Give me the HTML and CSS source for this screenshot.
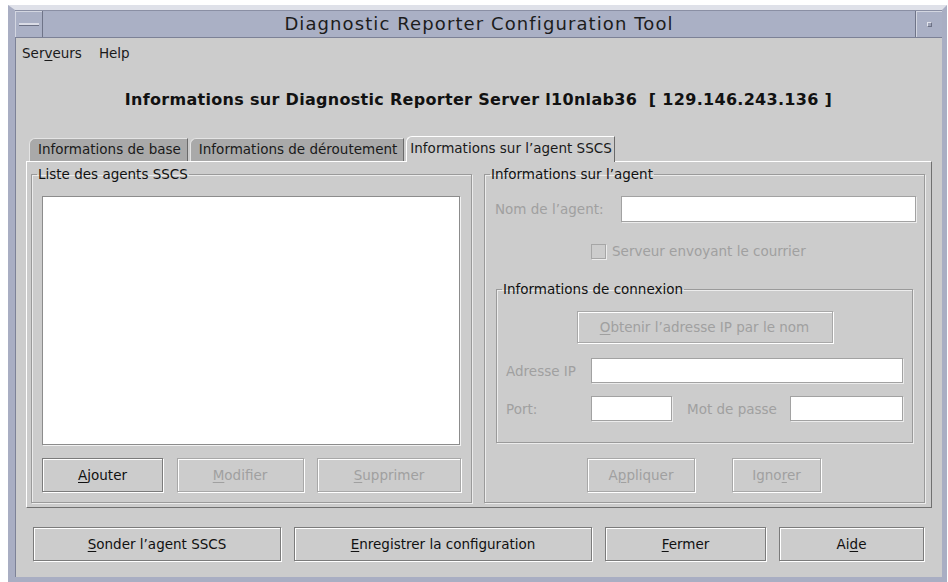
FILE: index.html
```html
<!DOCTYPE html>
<html lang="fr">
<head>
<meta charset="utf-8">
<title>Diagnostic Reporter Configuration Tool</title>
<link rel="stylesheet" href="styles.css">
</head>
<body>
<div class="window">
  <div class="titlebar">
    <div class="tb-btn tb-menu"><span class="tb-dash"></span></div>
    <div class="tb-title">Diagnostic Reporter Configuration Tool</div>
    <div class="tb-btn tb-max"><span class="tb-dot"></span></div>
  </div>

  <div class="menubar">
    <span class="menu-item">Ser<u>v</u>eurs</span>
    <span class="menu-item">Help</span>
  </div>

  <div class="client">
    <h1 class="server-heading">Informations sur Diagnostic Reporter Server l10nlab36&nbsp; [ 129.146.243.136 ]</h1>

    <div class="tabs">
      <div class="tab">Informations de base</div>
      <div class="tab">Informations de déroutement</div>
      <div class="tab active">Informations sur l’agent SSCS</div>
    </div>

    <div class="tab-panel">
      <fieldset class="group">
        <legend>Liste des agents SSCS</legend>
        <div class="agents-body">
          <div class="listbox"></div>
          <div class="agents-buttons">
            <button class="btn w-ajouter"><u>A</u>jouter</button>
            <button class="btn w-modifier" disabled><u>M</u>odifier</button>
            <button class="btn w-supprimer" disabled><u>S</u>upprimer</button>
          </div>
        </div>
      </fieldset>

      <fieldset class="group">
        <legend>Informations sur l’agent</legend>
        <div class="agent-body">
          <div class="row row-name">
            <label class="lbl lbl-name">Nom de l’agent:</label>
            <input class="field field-name" type="text" disabled>
          </div>
          <div class="row-check">
            <span class="checkbox"></span>
            <span class="lbl">Serveur envoyant le courrier</span>
          </div>

          <fieldset class="group conn">
            <legend>Informations de connexion</legend>
            <div class="conn-body">
              <div class="conn-lookup">
                <button class="btn w-lookup" disabled><u>O</u>btenir l’adresse IP par le nom</button>
              </div>
              <div class="row row-ip">
                <label class="lbl lbl-col">Adresse IP</label>
                <input class="field field-ip" type="text" disabled>
              </div>
              <div class="row row-port">
                <label class="lbl lbl-col">Port:</label>
                <input class="field field-port" type="text" disabled>
                <label class="lbl lbl-pass">Mot de passe</label>
                <input class="field field-pass" type="password" disabled>
              </div>
            </div>
          </fieldset>

          <div class="agent-buttons">
            <button class="btn w-appliquer" disabled>A<u>p</u>pliquer</button>
            <button class="btn w-ignorer" disabled>Igno<u>r</u>er</button>
          </div>
        </div>
      </fieldset>
    </div>

    <div class="actions">
      <button class="btn"><u>S</u>onder l’agent SSCS</button>
      <button class="btn"><u>E</u>nregistrer la configuration</button>
      <button class="btn"><u>F</u>ermer</button>
      <button class="btn">Ai<u>d</u>e</button>
    </div>
  </div>
</div>
</body>
</html>
```

FILE: styles.css
```css
* {
  box-sizing: border-box;
}

body {
  margin: 0;
  background: #ffffff;
  font-family: "DejaVu Sans", "Liberation Sans", sans-serif;
  font-size: 13.5px;
  color: #1a1a1a;
}

u {
  text-decoration: underline;
  text-decoration-thickness: 1px;
  text-underline-offset: 2px;
}

/* ---- window frame ---- */
.window {
  margin: 5px 0 0 8px;
  width: 939px;
  height: 577px;
  background: #cccccc;
  border-top: 5px solid #dfe1e9;
  border-left: 7px solid #a9aec3;
  border-right: 5px solid #a9aec3;
  border-bottom: 5px solid #a9aec3;
  box-shadow: inset 1px 0 0 #7d8297;
}

.titlebar {
  display: flex;
  height: 28px;
  background: #aab0c5;
  border-top: 1px solid #8a8fa4;
  border-bottom: 1px solid #7c8196;
}

.tb-btn {
  display: flex;
  align-items: center;
  justify-content: center;
  box-shadow: inset 1px 1px 0 #d3d6e1;
}

.tb-menu {
  width: 28px;
  border-right: 1px solid #6f7488;
}

.tb-dash {
  width: 20px;
  height: 3px;
  background: #dadce6;
  border-bottom: 1px solid #6c7185;
}

.tb-max {
  width: 27px;
  border-left: 1px solid #6f7488;
}

.tb-dot {
  width: 5px;
  height: 5px;
  background: #9da2b6;
  border-top: 1px solid #e2e4ec;
  border-left: 1px solid #e2e4ec;
  border-right: 1px solid #6c7185;
  border-bottom: 1px solid #6c7185;
}

.tb-title {
  flex: 1;
  text-align: center;
  line-height: 26px;
  font-size: 18px;
  letter-spacing: 1.1px;
  color: #1c1c1c;
}

/* ---- menu bar ---- */
.menubar {
  display: flex;
  align-items: center;
  gap: 17px;
  height: 29px;
  padding-left: 7px;
}

/* ---- client area ---- */
.server-heading {
  margin: 23px 0 0;
  height: 20px;
  line-height: 20px;
  font-size: 16px;
  font-weight: bold;
  letter-spacing: 0.3px;
  text-align: center;
  color: #111111;
}

.tabs {
  display: flex;
  align-items: flex-end;
  gap: 2px;
  margin: 26px 0 0 14px;
  height: 25px;
}

.tab {
  position: relative;
  height: 23px;
  padding: 0 6px 0 8px;
  line-height: 21px;
  background: #a9a9a9;
  border-top: 1px solid #e4e4e4;
  border-left: 1px solid #e4e4e4;
  border-right: 1px solid #6a6a6a;
  border-top-left-radius: 6px;
  white-space: nowrap;
}

.tab.active {
  height: 26px;
  margin-bottom: -1px;
  padding: 0 2px 0 3px;
  line-height: 22px;
  background: #cccccc;
  border-top-color: #ffffff;
  border-left-color: #ffffff;
  z-index: 1;
}

.tab-panel {
  display: grid;
  grid-template-columns: 441px 441px;
  column-gap: 12px;
  margin: 0 10px 0 11px;
  padding: 4px 6px 4px 4px;
  border: 1px solid;
  border-color: #ffffff #707070 #707070 #ffffff;
}

/* ---- etched group boxes ---- */
.group {
  margin: 0;
  padding: 0;
  min-width: 0;
  border: 1px solid #9a9a9a;
  box-shadow: inset 1px 1px 0 #ececec, 1px 1px 0 #ececec;
}

.group legend {
  margin-left: 5px;
  padding: 0 1px;
  line-height: 16px;
  color: #111111;
}

.agents-body {
  padding: 14px 11px 10px 10px;
}

.listbox {
  height: 249px;
  background: #ffffff;
  border: 1px solid #8c8c8c;
  box-shadow: 1px 1px 0 #f2f2f2;
}

.agents-buttons {
  display: flex;
  justify-content: space-between;
  margin: 13px -1px 0 0;
}

.agent-body {
  padding: 14px 8px 10px 10px;
}

.row {
  display: flex;
  align-items: center;
}

.lbl {
  color: #a0a0a0;
  white-space: nowrap;
}

.row-name {
  height: 26px;
}

.lbl-name {
  width: 126px;
}

.field {
  margin: 0;
  padding: 0;
  background: #ffffff;
  border: 1px solid #a2a2a2;
  box-shadow: 1px 1px 0 #ececec;
  font: inherit;
  -webkit-appearance: none;
  appearance: none;
}

.field-name {
  width: 295px;
  height: 26px;
}

.row-check {
  display: flex;
  align-items: center;
  height: 20px;
  margin-top: 19px;
  padding-left: 96px;
}

.checkbox {
  width: 15px;
  height: 15px;
  margin-right: 6px;
  border: 1px solid #a6a6a6;
  box-shadow: 1px 1px 0 #ececec;
}

.conn {
  width: 417px;
  margin: 20px 0 0 1px;
}

.conn-body {
  padding: 14px 9px 21px 9px;
}

.conn-lookup {
  display: flex;
  justify-content: center;
}

.row-ip {
  margin-top: 15px;
}

.row-port {
  margin-top: 13px;
}

.lbl-col {
  width: 85px;
}

.field-ip {
  flex: 1;
  height: 25px;
}

.field-port {
  width: 81px;
  height: 25px;
}

.lbl-pass {
  margin-left: 15px;
}

.field-pass {
  width: 113px;
  height: 25px;
  margin-left: auto;
}

.agent-buttons {
  display: flex;
  justify-content: center;
  gap: 37px;
  margin-top: 15px;
  padding-right: 3px;
}

/* ---- push buttons ---- */
.btn {
  height: 34px;
  padding: 0;
  background: #cccccc;
  border: 1px solid #7b7b7b;
  box-shadow: inset 1px 1px 0 #ffffff, 1px 1px 0 #ffffff;
  font: inherit;
  color: #111111;
  white-space: nowrap;
}

.btn:disabled {
  border-color: #a8a8a8;
  color: #a0a0a0;
}

.w-ajouter { width: 121px; }
.w-modifier { width: 127px; }
.w-supprimer { width: 144px; }
.w-lookup { width: 256px; height: 32px; }
.w-appliquer { width: 108px; }
.w-ignorer { width: 89px; }

.actions {
  display: grid;
  grid-template-columns: 248px 298px 161px 145px;
  column-gap: 13px;
  margin: 19px 0 0 18px;
}
```
